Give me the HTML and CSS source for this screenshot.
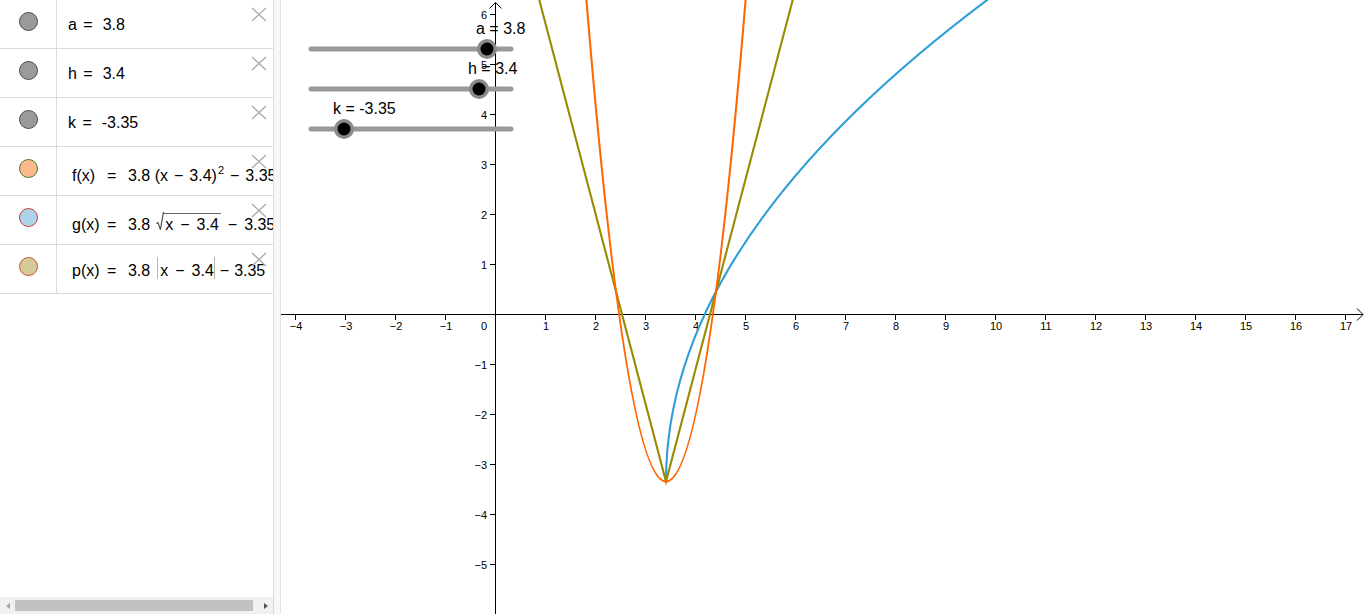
FILE: index.html
```html
<!DOCTYPE html>
<html>
<head>
<meta charset="utf-8">
<title>Graph</title>
<link rel="stylesheet" href="styles.css">
</head>
<body>
<div class="app">
  <aside class="algebra">
    <div class="rows">
      <div class="row">
        <div class="marble-cell"><span class="marble slider"></span></div>
        <div class="expr simple">a<span class="eq">=</span>3.8</div>
        <svg class="close" viewBox="0 0 16 15"><path d="M1 1L15 14M15 1L1 14"/></svg>
      </div>
      <div class="row">
        <div class="marble-cell"><span class="marble slider"></span></div>
        <div class="expr simple">h<span class="eq">=</span>3.4</div>
        <svg class="close" viewBox="0 0 16 15"><path d="M1 1L15 14M15 1L1 14"/></svg>
      </div>
      <div class="row">
        <div class="marble-cell"><span class="marble slider"></span></div>
        <div class="expr simple">k<span class="eq">=</span>-3.35</div>
        <svg class="close" viewBox="0 0 16 15"><path d="M1 1L15 14M15 1L1 14"/></svg>
      </div>
      <div class="row">
        <div class="marble-cell"><span class="marble col-f"></span></div>
        <div class="expr formula"><span class="fname">f(x)</span><span class="feq">=</span>3.8 (x<span class="op mid">−</span>3.4)<span class="sup">2</span><span class="op mid">−</span>3.35</div>
        <svg class="close" viewBox="0 0 16 15"><path d="M1 1L15 14M15 1L1 14"/></svg>
      </div>
      <div class="row">
        <div class="marble-cell"><span class="marble col-g"></span></div>
        <div class="expr formula"><span class="fname">g(x)</span><span class="feq">=</span>3.8<svg class="radical" viewBox="0 0 8 19"><path d="M0.3 11.5L2 10.6L4.4 17.6L7.4 0.5L8 0.5"/></svg><span class="radicand">x<span class="op">−</span>3.4</span><span class="op">−</span>3.35</div>
        <svg class="close" viewBox="0 0 16 15"><path d="M1 1L15 14M15 1L1 14"/></svg>
      </div>
      <div class="row">
        <div class="marble-cell"><span class="marble col-p"></span></div>
        <div class="expr formula flat"><span class="fname">p(x)</span><span class="feq">=</span>3.8<span class="abs">x<span class="op">−</span>3.4</span><span class="op tight">−</span>3.35</div>
        <svg class="close" viewBox="0 0 16 15"><path d="M1 1L15 14M15 1L1 14"/></svg>
      </div>
    </div>
    <div class="filler"></div>
    <div class="hscroll">
      <div class="sb-arrow left"></div>
      <div class="sb-thumb"></div>
      <div class="sb-track"></div>
      <div class="sb-arrow right"></div>
    </div>
  </aside>
  <div class="splitter"></div>
  <main class="graphics">
    <svg class="plot" viewBox="281 0 1085 614" width="1085" height="614">
      <g class="axes">
        <path d="M281 314.5H1363M495.5 2.5V614"/>
        <path d="M295.5 314.5v5M345.5 314.5v5M395.5 314.5v5M445.5 314.5v5M545.5 314.5v5M595.5 314.5v5M645.5 314.5v5M695.5 314.5v5M745.5 314.5v5M795.5 314.5v5M845.5 314.5v5M895.5 314.5v5M945.5 314.5v5M995.5 314.5v5M1045.5 314.5v5M1095.5 314.5v5M1145.5 314.5v5M1195.5 314.5v5M1245.5 314.5v5M1295.5 314.5v5M1345.5 314.5v5"/>
        <path d="M490 14.5h5.5M490 64.5h5.5M490 114.5h5.5M490 164.5h5.5M490 214.5h5.5M490 264.5h5.5M490 364.5h5.5M490 414.5h5.5M490 464.5h5.5M490 514.5h5.5M490 564.5h5.5"/>
      </g>
      <path class="arrow" d="M1357 308.5L1363 314.5L1357 320.5M489.5 8.5L495.5 2.5L501.5 8.5"/>
      <g class="xlabels">
        <text x="296" y="330">−4</text>
        <text x="346" y="330">−3</text>
        <text x="396" y="330">−2</text>
        <text x="446" y="330">−1</text>
        <text x="484" y="330">0</text>
        <text x="546" y="330">1</text>
        <text x="596" y="330">2</text>
        <text x="646" y="330">3</text>
        <text x="696" y="330">4</text>
        <text x="746" y="330">5</text>
        <text x="796" y="330">6</text>
        <text x="846" y="330">7</text>
        <text x="896" y="330">8</text>
        <text x="946" y="330">9</text>
        <text x="996" y="330">10</text>
        <text x="1046" y="330">11</text>
        <text x="1096" y="330">12</text>
        <text x="1146" y="330">13</text>
        <text x="1196" y="330">14</text>
        <text x="1246" y="330">15</text>
        <text x="1296" y="330">16</text>
        <text x="1346" y="330">17</text>
      </g>
      <g class="ylabels">
        <text x="487" y="18.5">6</text>
        <text x="487" y="68.5">5</text>
        <text x="487" y="118.5">4</text>
        <text x="487" y="168.5">3</text>
        <text x="487" y="218.5">2</text>
        <text x="487" y="268.5">1</text>
        <text x="487" y="368.5">−1</text>
        <text x="487" y="418.5">−2</text>
        <text x="487" y="468.5">−3</text>
        <text x="487" y="518.5">−4</text>
        <text x="487" y="568.5">−5</text>
      </g>
      <path class="curve g" d="M666 481.5Q666 239.3 991 -2.9"/>
      <path class="curve p" d="M536 -12.5L666 481.5L796 -12.5"/>
      <path class="curve f" d="M586 -4.9Q666 967.9 746 -4.9"/>
      <g class="slider">
        <line class="track" x1="311" y1="49" x2="511" y2="49"/>
        <circle class="halo" cx="487" cy="49" r="10"/>
        <circle class="knob" cx="487" cy="49" r="6.5"/>
        <text class="slabel" x="476" y="34">a = 3.8</text>
      </g>
      <g class="slider">
        <line class="track" x1="311" y1="89" x2="511" y2="89"/>
        <circle class="halo" cx="479" cy="89" r="10"/>
        <circle class="knob" cx="479" cy="89" r="6.5"/>
        <text class="slabel" x="468" y="74">h = 3.4</text>
      </g>
      <g class="slider">
        <line class="track" x1="311" y1="129" x2="511" y2="129"/>
        <circle class="halo" cx="344" cy="129" r="10"/>
        <circle class="knob" cx="344" cy="129" r="6.5"/>
        <text class="slabel" x="333" y="113.5">k = -3.35</text>
      </g>
    </svg>
  </main>
</div>
</body>
</html>
```

FILE: styles.css
```css
html, body {
  margin: 0;
  padding: 0;
  height: 100%;
}
body {
  font-family: "Liberation Sans", Arial, sans-serif;
  background: #fff;
  overflow: hidden;
}
.app {
  display: flex;
  width: 1366px;
  height: 614px;
}

/* ---------- algebra view ---------- */
.algebra {
  width: 273px;
  flex: none;
  border-right: 1px solid #dadada;
  display: flex;
  flex-direction: column;
  overflow: hidden;
}
.rows {
  display: flex;
  flex-direction: column;
  flex: none;
}
.row {
  position: relative;
  display: flex;
  height: 48px;
  flex: none;
  border-bottom: 1px solid #dcdcdc;
}
.marble-cell {
  width: 57px;
  box-sizing: border-box;
  flex: none;
  border-right: 1px solid #dcdcdc;
  display: flex;
  justify-content: center;
  align-items: flex-start;
  padding-top: 12px;
}
.marble {
  width: 19px;
  height: 19px;
  box-sizing: border-box;
  border-radius: 50%;
  border: 1px solid #555;
}
.marble.slider { background: #9a9a9a; border-color: #4d4d4d; }
.marble.col-f { background: #fdb98c; border-color: #3f7d2c; }
.marble.col-g { background: #acd4ea; border-color: #d23b35; }
.marble.col-p { background: #d5cb98; border-color: #c9523b; }

.expr {
  white-space: nowrap;
  font-size: 16px;
  line-height: 26px;
  color: #000;
}
.simple { padding: 12px 0 0 11px; }
.formula { padding: 15.5px 0 0 15px; }
.formula.flat { padding-top: 12px; }
.eq { margin: 0 10px 0 6.4px; }
.fname { display: inline-block; width: 28px; }
.feq { margin: 0 11.6px 0 7px; }
.op { margin: 0 7px; }
.op.mid { margin: 0 6px; }
.op.tight { margin: 0 5px; }
.sup {
  font-size: 11px;
  line-height: 0;
  vertical-align: 7px;
  margin-left: 1px;
}
.radical {
  width: 8px;
  height: 19px;
  vertical-align: -1px;
  margin-left: 6px;
  fill: none;
  stroke: #444;
  stroke-width: 1.1;
}
.radicand {
  display: inline-block;
  line-height: 16px;
  padding: 3px 2px 0 1px;
  border-top: 1px solid #666;
}
.abs {
  display: inline-block;
  line-height: 16px;
  padding: 6px 0 0 2px;
  margin-left: 7px;
  border-left: 1px solid #b3b3b3;
  border-right: 1px solid #b3b3b3;
}
.close {
  position: absolute;
  top: 7px;
  right: 6px;
  width: 16px;
  height: 15px;
  fill: none;
  stroke: #ababab;
  stroke-width: 1.4;
}
.filler { flex: 1; }

.hscroll {
  height: 17px;
  flex: none;
  display: flex;
  align-items: center;
  background: #f1f1f1;
}
.sb-arrow {
  width: 15px;
  height: 17px;
  flex: none;
  display: flex;
  align-items: center;
  justify-content: center;
}
.sb-arrow::before {
  content: "";
  width: 0;
  height: 0;
  border-style: solid;
}
.sb-arrow.left::before {
  border-width: 3.5px 4px 3.5px 0;
  border-color: transparent #a3a3a3 transparent transparent;
}
.sb-arrow.right::before {
  border-width: 3.5px 0 3.5px 4px;
  border-color: transparent transparent transparent #505050;
}
.sb-thumb {
  width: 238px;
  height: 11px;
  flex: none;
  background: #c1c1c1;
}
.sb-track { flex: 1; }

.splitter {
  width: 6px;
  flex: none;
  background: #f7f7f7;
  border-right: 1px solid #e3e3e3;
}

/* ---------- graphics view ---------- */
.graphics {
  width: 1085px;
  flex: none;
  height: 614px;
  overflow: hidden;
}
.plot { display: block; }
.axes path {
  fill: none;
  stroke: #000;
  stroke-width: 1;
  shape-rendering: crispEdges;
}
.arrow {
  fill: none;
  stroke: #000;
  stroke-width: 1;
}
.xlabels text, .ylabels text {
  font-family: "Liberation Sans", Arial, sans-serif;
  font-size: 11px;
  fill: #000;
}
.xlabels text { text-anchor: middle; }
.ylabels text { text-anchor: end; }
.curve {
  fill: none;
  stroke-width: 2.1;
  stroke-linejoin: miter;
}
.curve.f { stroke: #ff6600; }
.curve.g { stroke: #2f9ed6; }
.curve.p { stroke: #998a00; }
.track {
  stroke: #999;
  stroke-width: 5;
  stroke-linecap: round;
}
.halo { fill: #8a8a8a; }
.knob { fill: #000; }
.slabel {
  font-family: "Liberation Sans", Arial, sans-serif;
  font-size: 16px;
  fill: #000;
}
```
